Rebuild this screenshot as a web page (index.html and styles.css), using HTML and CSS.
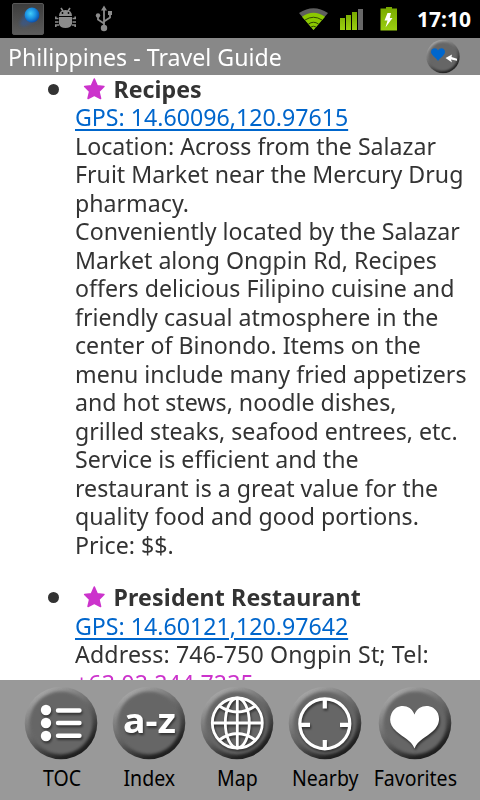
FILE: index.html
```
<!DOCTYPE html>
<html lang="en">
<head>
  <meta charset="UTF-8" />
  <meta name="viewport" content="width=device-width, initial-scale=1.0" />
  <title>Philippines - Travel Guide</title>
  <link rel="stylesheet" href="styles.css">
</head>
<body>
  <!-- shared shapes -->
  <svg class="defs" width="0" height="0">
    <defs>
      <linearGradient id="rim" x1="0.2" y1="0" x2="0.8" y2="1">
        <stop offset="0" stop-color="#b0b0b0" />
        <stop offset="0.3" stop-color="#808080" />
        <stop offset="0.55" stop-color="#5c5c5c" />
        <stop offset="0.85" stop-color="#222" />
        <stop offset="1" stop-color="#1c1c1c" />
      </linearGradient>
      <radialGradient id="ball" cx="0.4" cy="0.4" r="0.7">
        <stop offset="0" stop-color="#42cdf8" />
        <stop offset="0.5" stop-color="#1a8fe0" />
        <stop offset="1" stop-color="#063d9e" />
      </radialGradient>
      <linearGradient id="tile" x1="0" y1="0" x2="0" y2="1">
        <stop offset="0" stop-color="#3c3c3c" />
        <stop offset="1" stop-color="#5c5c5c" />
      </linearGradient>
      <linearGradient id="green" x1="0" y1="0" x2="0" y2="1">
        <stop offset="0" stop-color="#78a800" />
        <stop offset="1" stop-color="#9bd010" />
      </linearGradient>
      <filter id="soft" x="-20%" y="-20%" width="140%" height="140%"><feGaussianBlur stdDeviation="1.8" /></filter>
      <symbol id="disc" viewBox="0 0 74 74">
        <circle cx="37" cy="37" r="36.3" fill="url(#rim)" />
        <circle cx="37" cy="37" r="31.5" fill="#666" filter="url(#soft)" />
      </symbol>
      <symbol id="star" viewBox="0 0 24 24">
        <path d="M12 2 L15 8.800 L22 9.500 L16.800 14.400 L18.500 21.500 L12 18.300 L5.500 21.500 L7.200 14.400 L2 9.500 L9 8.800 Z" fill="#cc33cc" stroke="#cc33cc" stroke-width="1.600" stroke-linejoin="round" />
      </symbol>
    </defs>
  </svg>

  <div class="status">
    <svg class="status-left" width="130" height="38" viewBox="0 0 130 38">
      <rect x="12.500" y="3.500" width="31" height="31" rx="1.500" fill="url(#tile)" stroke="#585858" />
      <path d="M26 11 L20 23 Q21 28 26 26 L38 20 Z" fill="#315c9c" opacity="0.6" filter="url(#soft)" />
      <circle cx="32" cy="15" r="7.400" fill="url(#ball)" />
      <path d="M59 16 Q59 10 65.500 10 Q72 10 72 16 Z M59 17 H72 V24 Q71 28 65.500 28 Q60 28 59 24 Z" fill="#8c8c8c" />
      <path d="M61 8 L63 11 M70 8 L68 11 M58.500 18.500 H55.800 V16.500 M58.500 22 H55 M59 25 H55.800 V27 M72.500 18.500 H75.200 V16.500 M72.500 22 H76 M72 25 H75.200 V27" fill="none" stroke="#8c8c8c" stroke-width="1.600" />
      <circle cx="62.500" cy="13" r="0.900" />
      <circle cx="68.500" cy="13" r="0.900" />
      <path d="M104 9 V28 M104 23.500 L98 19.500 V15 M104 21.500 L110 17.500 V13" fill="none" stroke="#8c8c8c" stroke-width="1.800" />
      <path d="M101 10.500 L104 5.500 L107 10.500 Z M108 11 H112 V15 H108 Z" fill="#8c8c8c" />
      <circle cx="98" cy="15.500" r="2.200" fill="#8c8c8c" />
      <circle cx="104" cy="28" r="3.200" fill="#8c8c8c" />
    </svg>
    <svg class="status-right" width="104" height="38" viewBox="296 0 104 38">
      <path d="M313.500 30 L299 13 Q313.500 3.500 328 13 Z" fill="#5e5e5e" />
      <path d="M313.500 30 L302 16.800 Q313.500 8.500 325 16.800 Z" fill="#8bc800" />
      <path d="M305 20 Q313.500 14.500 322 20 M308.500 24 Q313.500 20.500 318.500 24 M311 27 Q313.500 25.500 316 27" fill="none" stroke="#263a00" stroke-width="0.900" />
      <path d="M340 18 h5 v12 h-5 Z M346 15 h5 v15 h-5 Z M352 12 h5 v18 h-5 Z" fill="url(#green)" />
      <rect x="358" y="9" width="5" height="21" fill="#686868" />
      <path d="M386 7 h6 v1.500 h5 v22 h-16.500 v-22 h5.500 Z" fill="url(#green)" />
      <path d="M387.500 13 L391 13 L389.800 18 L392.500 18 L385.500 27.500 L387.500 20.500 L384.500 20.500 Z" fill="#fff" />
    </svg>
    <span class="clock">17:10</span>
  </div>

  <div class="titlebar">
    <h1>Philippines - Travel Guide</h1>
    <svg class="fav-toggle" width="36" height="36" viewBox="0 0 36 36">
      <use href="#disc" x="0" y="0.500" width="34" height="34" />
      <path d="M12 22 C9.500 18 5 16 5 13 C5 9 10.500 8 12 11.500 C14 8 19 9 19 13 C19 16 15 18 12 22 Z" fill="#0066cc" />
      <path d="M19.500 19 L26 15.500 L25.500 18 L31 19.700 V21.700 L25 20.500 L26 23.500 Z" fill="#fff" />
    </svg>
  </div>

  <div class="content">
    <div class="entry">
      <div class="bullet"></div>
      <div class="text">
        <div class="name"><svg class="star" width="24" height="24"><use href="#star" /></svg>Recipes</div>
        <a class="gps" href="#">GPS: 14.60096,120.97615</a><br>
        Location: Across from the Salazar<br>
        Fruit Market near the Mercury Drug<br>
        pharmacy.<br>
        Conveniently located by the Salazar<br>
        Market along Ongpin Rd, Recipes<br>
        offers delicious Filipino cuisine and<br>
        friendly casual atmosphere in the<br>
        center of Binondo. Items on the<br>
        menu include many fried appetizers<br>
        and hot stews, noodle dishes,<br>
        grilled steaks, seafood entrees, etc.<br>
        Service is efficient and the<br>
        restaurant is a great value for the<br>
        quality food and good portions.<br>
        Price: $$.
      </div>
    </div>
    <div class="entry">
      <div class="bullet"></div>
      <div class="text">
        <div class="name wide"><svg class="star" width="24" height="24"><use href="#star" /></svg>President Restaurant</div>
        <a class="gps" href="#">GPS: 14.60121,120.97642</a><br>
        <span class="wide">Address: 746-750 Ongpin St; Tel:</span><br>
        <span class="tel wide">+63 02 244 7235</span>
      </div>
    </div>
  </div>

  <div class="toolbar">
    <div class="tool">
      <svg width="74" height="74" viewBox="0 0 74 74">
        <use href="#disc" width="74" height="74" />
        <g class="glyph" fill="#fff">
          <circle cx="22" cy="24" r="5.200" />
          <circle cx="22" cy="37" r="5.200" />
          <circle cx="22" cy="50" r="5.200" />
          <path d="M34 24.500 H55.500 M34 37 H55.500 M34 49.800 H55.500" stroke="#fff" stroke-width="4.400" stroke-linecap="round" />
        </g>
      </svg>
      <span>TOC</span>
    </div>
    <div class="tool">
      <svg width="74" height="74" viewBox="0 0 74 74">
        <use href="#disc" width="74" height="74" />
        <text class="glyph az" x="11" y="47" textLength="53" lengthAdjust="spacingAndGlyphs">a-z</text>
      </svg>
      <span>Index</span>
    </div>
    <div class="tool">
      <svg width="74" height="74" viewBox="0 0 74 74">
        <use href="#disc" width="74" height="74" />
        <g class="glyph" fill="none" stroke="#fff" stroke-width="2.800">
          <circle cx="37.300" cy="37" r="25" />
          <ellipse cx="37.300" cy="37" rx="12" ry="25" />
          <path d="M37.300 12 V62 M12.300 37 H62.300 M19.300 20 Q37.300 32 55.300 20 M19.300 54 Q37.300 41 55.300 54" />
        </g>
      </svg>
      <span>Map</span>
    </div>
    <div class="tool">
      <svg width="74" height="74" viewBox="0 0 74 74">
        <use href="#disc" width="74" height="74" />
        <g class="glyph" fill="none" stroke="#fff">
          <circle cx="36.800" cy="37.800" r="25" stroke-width="3.200" />
          <path d="M36.800 13 V22.500 M36.800 54 V63 M12 38.800 H22 M52 38.800 H62" stroke-width="4.200" />
        </g>
      </svg>
      <span>Nearby</span>
    </div>
    <div class="tool">
      <svg width="74" height="74" viewBox="0 0 74 74">
        <use href="#disc" width="74" height="74" />
        <path class="glyph" d="M36.500 62.500 C33 54 25 51.500 18.500 45.500 C11.500 39.500 11 33 13.500 27.500 C18 17.500 32.500 17.500 36.500 28.500 C40.500 17.500 55.500 17.500 60 27.500 C62 33 61.500 39.500 54.500 45.500 C48 51.500 40 54 36.500 62.500 Z" fill="#fff" />
      </svg>
      <span>Favorites</span>
    </div>
  </div>
</body>
</html>
```
FILE: styles.css
```
body {
  margin: 0;
  width: 480px;
  height: 800px;
  overflow: hidden;
  background: #fff;
  color: #333;
  font-family: "Noto Sans", "Open Sans", sans-serif;
  font-variant-ligatures: none;
  display: flex;
  flex-direction: column;
}

.defs {
  position: absolute;
}

.status {
  flex: none;
  height: 38px;
  background: #000;
  display: flex;
  align-items: center;
}

.status-right {
  margin-left: auto;
  margin-right: 8px;
}

.clock {
  width: 63px;
  margin-right: 9px;
  text-align: right;
  color: #fff;
  font-size: 21px;
  font-weight: bold;
}

.titlebar {
  flex: none;
  height: 37px;
  background: #888;
  display: flex;
  align-items: center;
  justify-content: space-between;
  padding: 0 18px 0 8px;
}

h1 {
  margin: 0;
  color: #fff;
  font-size: 24px;
  font-weight: normal;
  line-height: 37px;
  white-space: nowrap;
  transform: scaleX(0.965);
  transform-origin: left;
}

.content {
  flex: 1;
  min-height: 0;
  overflow: hidden;
  font-size: 24px;
  line-height: 28.5px;
}

.entry {
  display: flex;
  align-items: flex-start;
  margin-top: -0.5px;
  margin-bottom: 24.5px;
}

.bullet {
  flex: none;
  width: 11px;
  height: 11px;
  margin: 9px 16px 0 48px;
  border-radius: 50%;
  background: #333;
}

/* slightly condensed text */
.text {
  white-space: nowrap;
  transform: scaleX(0.965);
  transform-origin: left;
}

.name {
  display: flex;
  align-items: center;
  font-weight: bold;
}

.wide {
  letter-spacing: 0.13px;
}

.star {
  margin: 0 8px 0 8px;
}

.gps {
  color: #0066cc;
  text-decoration-thickness: 1.5px;
  text-underline-offset: 3px;
}

.tel {
  color: #cc33cc;
}

.toolbar {
  flex: none;
  height: 120px;
  background: #999;
  display: grid;
  grid-template-columns: 88px 88px 88px 88px 92.5px;
  padding-left: 17px;
  box-sizing: border-box;
}

.tool {
  display: flex;
  flex-direction: column;
  align-items: center;
  padding-top: 6px;
  color: #000;
  font-size: 21px;
  line-height: 36px;
}

.tool svg {
  flex: none;
}

.tool span {
  transform: translateX(0.5px) scaleX(0.93);
}

.glyph {
  filter: drop-shadow(1px 2px 1px #333);
}

.az {
  fill: #fff;
  font-size: 34px;
  font-weight: bold;
}
```
